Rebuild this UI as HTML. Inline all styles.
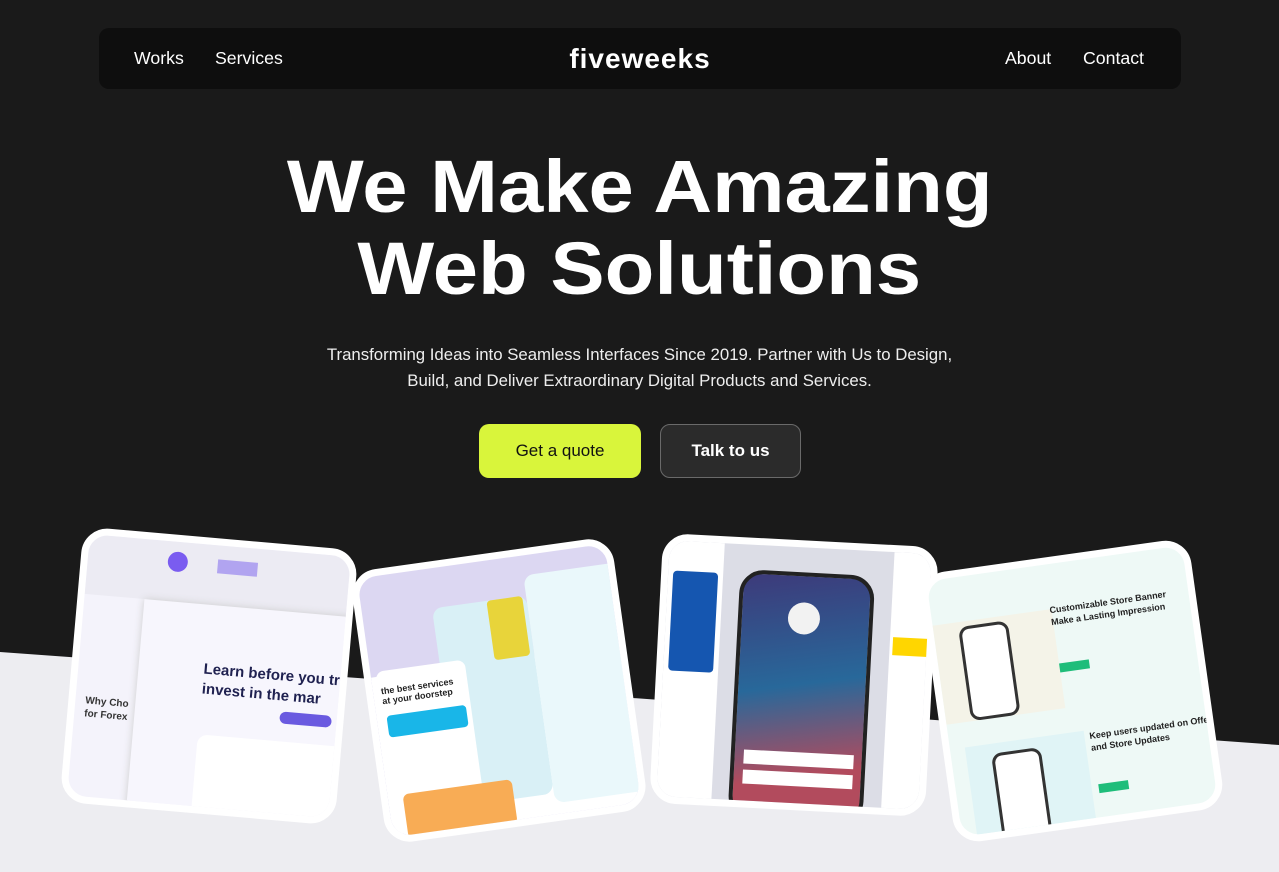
<!DOCTYPE html>
<html><head><meta charset="utf-8"><style>
*{margin:0;padding:0;box-sizing:border-box}
body{width:1279px;height:872px;overflow:hidden;background:#1a1a1a;font-family:"Liberation Sans",sans-serif;position:relative;color:#fff}
.bgl{position:absolute;left:0;top:0;width:1279px;height:872px}
nav{position:absolute;left:99px;top:28px;width:1082px;height:61px;background:#0e0e0e;border-radius:10px}
nav a{position:absolute;top:20px;font-size:17.7px;color:#fff}
.logo{position:absolute;left:0;right:0;top:15px;text-align:center;font-size:28px;font-weight:bold;letter-spacing:1px}
h1{position:absolute;left:0;right:0;top:146px;text-align:center;font-size:74px;line-height:82px;font-weight:bold;letter-spacing:0px}
h1 span{display:inline-block;transform:scaleX(1.1)}
.sub{position:absolute;left:0;right:0;top:342px;text-align:center;font-size:16.8px;line-height:26px;color:#eee}
.b1{position:absolute;left:479px;top:424px;width:162px;height:54px;background:#d9f53b;border-radius:10px;color:#111;font-size:17px;text-align:center;line-height:54px}
.b2{position:absolute;left:660px;top:424px;width:141px;height:54px;background:#2b2b2b;border:1px solid #6a6a6a;border-radius:10px;color:#fff;font-size:17px;font-weight:bold;text-align:center;line-height:52px}
.card{position:absolute;border:7px solid #fff;border-radius:26px;overflow:hidden;background:#f4f3fb}
.card *{position:absolute}
</style></head><body>
<svg class="bgl"><polygon points="0,652 1279,745 1279,872 0,872" fill="#ededf1"/></svg>
<nav><a style="left:35px">Works</a><a style="left:116px">Services</a><div class="logo">fiveweeks</div><a style="left:906px">About</a><a style="left:984px">Contact</a></nav>
<h1><span>We Make Amazing</span><br><span>Web Solutions</span></h1>
<div class="sub">Transforming Ideas into Seamless Interfaces Since 2019. Partner with Us to Design,<br>Build, and Deliver Extraordinary Digital Products and Services.</div>
<div class="b1">Get a quote</div><div class="b2">Talk to us</div>

<div class="card" style="left:71px;top:538px;width:276px;height:276px;transform:rotate(5deg)">
 <div style="left:0;top:0;width:276px;height:60px;background:#ecebf3"></div>
 <div style="left:80px;top:10px;width:20px;height:20px;border-radius:50%;background:#7a5cf0"></div>
 <div style="left:130px;top:14px;width:40px;height:14px;background:#8a74ee;opacity:.6"></div>
 <div style="left:60px;top:60px;width:216px;height:210px;background:#f7f6fd;box-shadow:0 0 8px #ccc"></div>
 <div style="left:125px;top:115px;width:150px;font-size:15px;line-height:20px;color:#1f2150;font-weight:bold">Learn before you tra invest in the mar</div>
 <div style="left:205px;top:160px;width:52px;height:12px;border-radius:6px;background:#6a5ae0"></div>
 <div style="left:125px;top:190px;width:150px;height:80px;border-radius:10px;background:#fff"></div>
 <div style="left:10px;top:160px;font-size:10px;color:#333;font-weight:bold;line-height:13px">Why Cho<br>for Forex</div>
</div>

<div class="card" style="left:367px;top:553px;width:264px;height:275px;transform:rotate(-8deg);background:#dcd7f2">
 <div style="left:0;top:100px;width:264px;height:175px;background:#fff"></div>
 <div style="left:70px;top:40px;width:95px;height:200px;border-radius:10px;background:#d9f0f6"></div>
 <div style="left:125px;top:40px;width:36px;height:60px;background:#e8d43a;border-radius:4px"></div>
 <div style="left:165px;top:20px;width:99px;height:230px;border-radius:10px;background:#eaf8fb"></div>
 <div style="left:5px;top:95px;width:90px;height:180px;background:#fff;border-radius:8px"></div>
 <div style="left:10px;top:140px;width:80px;height:22px;background:#19b6e8;border-radius:4px"></div>
 <div style="left:15px;top:220px;width:110px;height:45px;background:#f8ac55;border-radius:6px"></div>
 <div style="left:8px;top:110px;font-size:9px;color:#222;font-weight:bold;width:80px">the best services at your doorstep</div>
</div>

<div class="card" style="left:656px;top:540px;width:276px;height:270px;transform:rotate(3deg);background:#dcdde6">
 <div style="left:0;top:0;width:55px;height:270px;background:#fff"></div>
 <div style="left:5px;top:30px;width:45px;height:100px;background:#1556b0;border-radius:4px"></div>
 <div style="left:225px;top:0;width:51px;height:270px;background:#fff"></div>
 <div style="left:228px;top:85px;width:48px;height:18px;background:#ffd600"></div>
 <div style="left:72px;top:25px;width:135px;height:250px;border-radius:24px;background:linear-gradient(170deg,#3d3a7a 0%,#28689a 45%,#b24b5d 80%);border:4px solid #222"></div>
 <div style="left:122px;top:55px;width:32px;height:32px;border-radius:50%;background:#f2f2f2"></div>
 <div style="left:85px;top:205px;width:110px;height:14px;background:#fff"></div>
 <div style="left:85px;top:225px;width:110px;height:14px;background:#fff"></div>
</div>

<div class="card" style="left:936px;top:555px;width:272px;height:272px;transform:rotate(-8deg);background:#eef9f6">
 <div style="left:0;top:45px;width:120px;height:100px;background:#f4f3e8"></div>
 <div style="left:25px;top:50px;width:50px;height:95px;border:3px solid #333;border-radius:10px;background:#fff"></div>
 <div style="left:15px;top:170px;width:120px;height:95px;background:#e0f4f6"></div>
 <div style="left:40px;top:180px;width:50px;height:90px;border:3px solid #333;border-radius:10px;background:#fff"></div>
 <div style="left:118px;top:40px;font-size:9px;font-weight:bold;color:#222;line-height:12px;width:130px">Customizable Store Banner Make a Lasting Impression</div>
 <div style="left:120px;top:100px;width:30px;height:9px;background:#1ebd7a"></div>
 <div style="left:140px;top:170px;font-size:9px;font-weight:bold;color:#222;line-height:12px;width:130px">Keep users updated on Offers and Store Updates</div>
 <div style="left:142px;top:225px;width:30px;height:9px;background:#1ebd7a"></div>
</div>
</body></html>
